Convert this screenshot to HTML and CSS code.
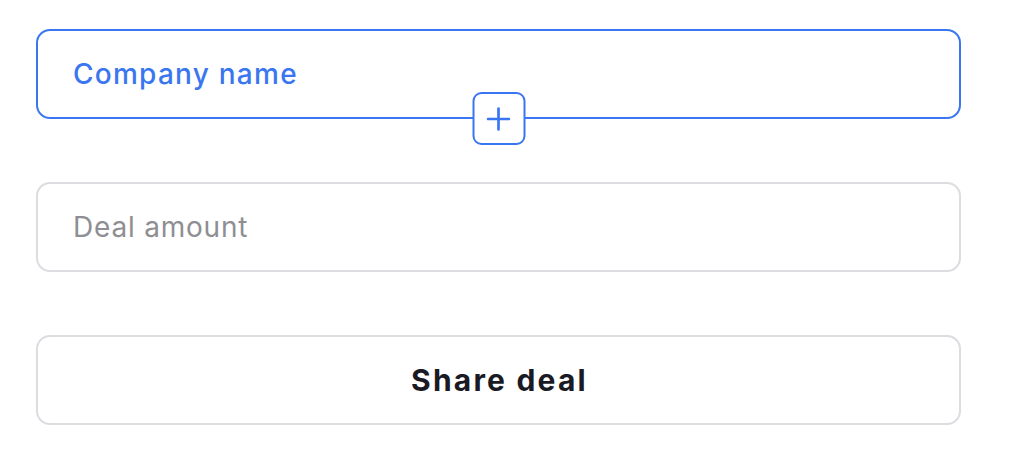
FILE: index.html
```html
<!DOCTYPE html>
<html lang="en">
<head>
<meta charset="utf-8">
<title>Share deal</title>
<link rel="stylesheet" href="styles.css">
</head>
<body>
<main class="form">
  <div class="field field--active">
    <span class="field__label">Company name</span>
    <button class="add-btn" type="button" aria-label="Add">
      <svg width="24" height="24" viewBox="0 0 24 24" fill="none" stroke="currentColor" stroke-width="2.7" stroke-linecap="round"><path d="M12 1.5v21M1.5 12h21"/></svg>
    </button>
  </div>
  <div class="field">
    <span class="field__placeholder">Deal amount</span>
  </div>
  <button class="share-btn" type="button">Share deal</button>
</main>
</body>
</html>
```

FILE: styles.css
```css
* { box-sizing: border-box; }
html, body { margin: 0; background: #ffffff; }
body {
  font-family: Inter, "Noto Sans", "Liberation Sans", sans-serif;
  padding: 29px 55px 0 36px;
}
.form {
  display: flex;
  flex-direction: column;
  gap: 63px;
  width: 925px;
}
.field {
  position: relative;
  height: 90px;
  border: 2px solid #dcdce1;
  border-radius: 14px;
  display: flex;
  align-items: center;
  padding-left: 35px;
  font-size: 28px;
}
.field--active { border-color: #3a76f0; }
.field__label { color: #3a76f0; font-weight: 500; letter-spacing: 1.25px; }
.field__placeholder { color: #8e8e93; font-weight: 400; letter-spacing: 0.8px; }
.add-btn {
  position: absolute;
  left: 50%;
  bottom: -28px;
  transform: translateX(-50%);
  width: 53px;
  height: 53px;
  border: 2px solid #3a76f0;
  border-radius: 9px;
  background: #fff;
  color: #3a76f0;
  display: flex;
  align-items: center;
  justify-content: center;
  padding: 0;
}
.share-btn {
  height: 90px;
  border: 2px solid #dcdce1;
  border-radius: 14px;
  background: #fff;
  font-family: inherit;
  font-size: 30px;
  font-weight: 700;
  letter-spacing: 2.2px;
  color: #1a1a24;
  padding: 0 0 0 2px;
}
```
